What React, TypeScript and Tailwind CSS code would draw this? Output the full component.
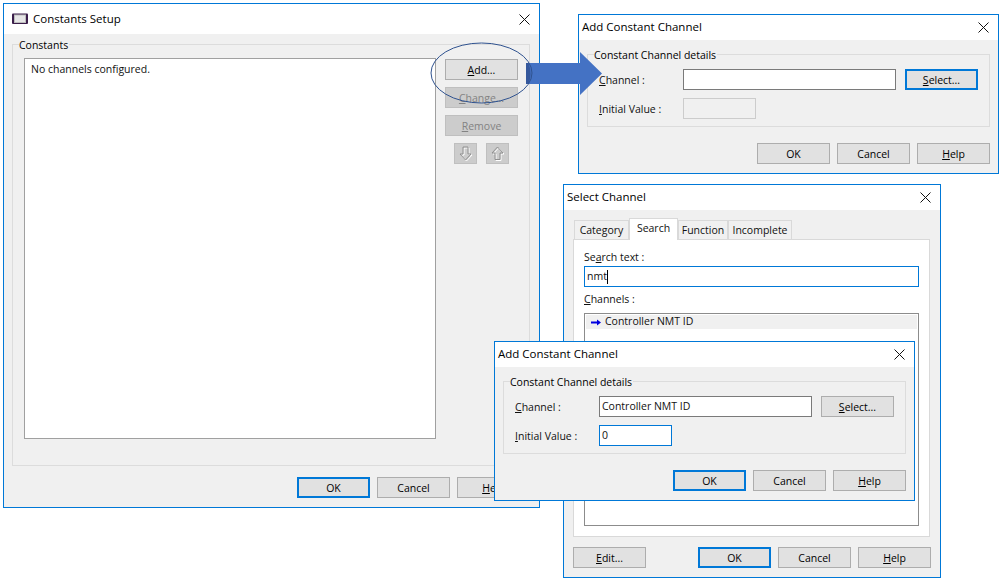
import type { ReactNode } from 'react';

function WinButton({ label, focused, disabled, className }: { label: ReactNode; focused?: boolean; disabled?: boolean; className?: string }) {
  let look = 'border border-[#adadad] bg-[#e1e1e1] text-black';
  if (focused) look = 'border-2 border-[#0078d7] bg-[#e1e1e1] text-black';
  if (disabled) look = 'border border-[#bfbfbf] bg-[#cccccc] text-[#838383]';
  return (
    <div className={`flex h-[21px] w-[73px] shrink-0 items-center justify-center ${look} ${className ?? ''}`}>
      <span className="pt-[2px]">{label}</span>
    </div>
  );
}

function TitleBar({ title, icon, tall }: { title: string; icon?: ReactNode; tall?: boolean }) {
  return (
    <div className={`flex shrink-0 items-center bg-white pl-[3px] pr-[9px] ${tall ? 'h-[30px]' : 'h-[25px]'}`}>
      {icon}
      <span className="flex-1 pb-[1px] text-[11.5px] text-black">{title}</span>
      <CloseIcon />
    </div>
  );
}

function CloseIcon() {
  return (
    <svg width="11" height="11" viewBox="0 0 11 11" className="shrink-0">
      <path d="M0.5 0.5 L10.5 10.5 M10.5 0.5 L0.5 10.5" stroke="#111" strokeWidth="1" fill="none" />
    </svg>
  );
}

function BookIcon() {
  return (
    <svg width="16" height="12" viewBox="0 0 16 12" className="mr-[5px] ml-[5px] shrink-0">
      <rect x="0" y="0.5" width="16" height="10.5" rx="1" fill="#3b1e4a" />
      <rect x="2" y="1.5" width="12" height="8.5" fill="#bdbdbd" />
      <rect x="3" y="2.5" width="10" height="6.5" fill="#e6e6e6" />
    </svg>
  );
}

function ArrowIcon({ up }: { up?: boolean }) {
  const d = up
    ? 'M6.5 1 L12 7 L9 7 L9 13.5 L4 13.5 L4 7 L1 7 Z'
    : 'M4 1 L9 1 L9 8 L12 8 L6.5 14 L1 8 L4 8 Z';
  return (
    <div className="flex h-[21px] w-[23px] items-center justify-center border border-[#bfbfbf] bg-[#cccccc]">
      <svg width="14" height="16" viewBox="0 0 14 16">
        <path d={d} transform="translate(1 1)" fill="none" stroke="#ffffff" strokeWidth="1" />
        <path d={d} fill="none" stroke="#909090" strokeWidth="1" />
      </svg>
    </div>
  );
}

function GroupBox({ label, className, children }: { label: string; className?: string; children: ReactNode }) {
  return (
    <div className={`relative border border-[#dcdcdc] ${className ?? ''}`}>
      <span className="absolute left-[6px] top-[-8px] bg-[#f0f0f0] pr-[1px] leading-[16px] text-black">{label}</span>
      {children}
    </div>
  );
}

function AddChannelDialog({ className, channel, value, selectFocused, valueEnabled, okFocused }: {
  className: string;
  channel?: string;
  value?: string;
  selectFocused?: boolean;
  valueEnabled?: boolean;
  okFocused?: boolean;
}) {
  return (
    <div className={`absolute flex flex-col border border-[#0078d7] bg-[#f0f0f0] ${className}`}>
      <TitleBar title="Add Constant Channel" />
      <div className="flex flex-1 flex-col px-[8px] pt-[14px]">
        <GroupBox label="Constant Channel details" className="h-[73px] px-[11px] pt-[14px]">
          <div className="flex items-center">
            <span className="w-[84px] shrink-0 pt-[2px]"><u>C</u>hannel :</span>
            <div className="flex h-[21px] w-[213px] shrink-0 items-center border border-[#7a7a7a] bg-white pl-[2px]">{channel}</div>
            <WinButton label={<><u>S</u>elect...</>} focused={selectFocused} className="ml-[9px]" />
          </div>
          <div className="mt-[8px] flex items-center">
            <span className="w-[84px] shrink-0 pt-[2px]"><u>I</u>nitial Value :</span>
            <div className={`flex h-[21px] w-[73px] items-center pl-[2px] ${valueEnabled ? 'border border-[#0078d7] bg-white' : 'border border-[#cccccc] bg-[#f0f0f0]'}`}>{value}</div>
          </div>
        </GroupBox>
        <div className="mt-[16px] flex justify-end gap-[7px]">
          <WinButton label="OK" focused={okFocused} />
          <WinButton label="Cancel" />
          <WinButton label={<><u>H</u>elp</>} />
        </div>
      </div>
    </div>
  );
}

function ConstantsSetup() {
  return (
    <div className="absolute left-[3px] top-[3px] flex h-[505px] w-[537px] flex-col border border-[#0078d7] bg-[#f0f0f0]">
      <TitleBar title="Constants Setup" icon={<BookIcon />} tall />
      <div className="flex flex-1 flex-col pl-[8px] pr-[9px] pt-[10px]">
        <GroupBox label="Constants" className="flex h-[422px] pl-[11px] pt-[13px]">
          <div className="h-[381px] w-[412px] border border-[#a0a0a0] bg-white px-[6px] pt-[3px]">No channels configured.</div>
          <div className="ml-[9px] flex w-[73px] flex-col gap-[7px] pt-[1px]">
            <WinButton label={<><u>A</u>dd...</>} />
            <WinButton label={<><u>C</u>hange...</>} disabled />
            <WinButton label={<><u>R</u>emove</>} disabled />
            <div className="flex justify-center gap-[9px]">
              <ArrowIcon />
              <ArrowIcon up />
            </div>
          </div>
        </GroupBox>
        <div className="mt-[11px] flex justify-end gap-[7px]">
          <WinButton label="OK" focused />
          <WinButton label="Cancel" />
          <WinButton label={<><u>H</u>elp</>} />
        </div>
      </div>
    </div>
  );
}

function SelectChannel() {
  const tabs = ['Category', 'Search', 'Function', 'Incomplete'];
  const widths = ['w-[55px]', 'w-[49px]', 'w-[50px]', 'w-[64px]'];
  return (
    <div className="absolute left-[563px] top-[184px] flex h-[394px] w-[378px] flex-col border border-[#0078d7] bg-[#f0f0f0]">
      <TitleBar title="Select Channel" />
      <div className="flex flex-1 flex-col px-[9px]">
        <div className="flex h-[29px] items-end pl-[1px]">
          {tabs.map((t, i) => (
            <div
              key={t}
              className={`flex items-center justify-center border border-b-0 border-[#d9d9d9] ${widths[i]} ${t === 'Search' ? 'relative z-10 mb-[-1px] h-[22px] bg-white pb-[2px]' : 'h-[19px] bg-[#f0f0f0] pt-[1px]'}`}
            >
              {t}
            </div>
          ))}
        </div>
        <div className="mr-[1px] flex h-[298px] flex-col border border-[#d9d9d9] bg-white px-[10px] pt-[9px]">
          <span className="leading-[16px]">Se<u>a</u>rch text :</span>
          <div className="mt-[1px] flex h-[21px] items-center border border-[#0078d7] pl-[2px]">nmt<span className="h-[14px] w-px bg-black" /></div>
          <span className="mt-[4px] leading-[16px]"><u>C</u>hannels :</span>
          <div className="mt-[6px] h-[213px] border border-[#8c8c8c] p-[1px]">
            <div className="flex h-[14px] items-center bg-[#f0f0f0] pl-[5px]">
              <svg width="10" height="7" viewBox="0 0 10 7" className="mr-[4px]">
                <path d="M0 2.5 H6 V0.5 L10 3.5 L6 6.5 V4.5 H0 Z" fill="#0000e0" />
              </svg>
              Controller NMT ID
            </div>
          </div>
        </div>
        <div className="mt-[10px] flex gap-[7px]">
          <WinButton label={<><u>E</u>dit...</>} className="mr-[45px]" />
          <WinButton label="OK" focused />
          <WinButton label="Cancel" />
          <WinButton label={<><u>H</u>elp</>} />
        </div>
      </div>
    </div>
  );
}

export default function App() {
  return (
    <div className="relative h-[582px] w-[1003px] overflow-hidden bg-white text-[10.5px] text-[#111] [font-family:'Open_Sans','Noto_Sans',sans-serif]">
      <ConstantsSetup />
      <AddChannelDialog className="left-[578px] top-[14px] h-[160px] w-[421px]" selectFocused />
      <SelectChannel />
      <AddChannelDialog className="left-[494px] top-[341px] h-[160px] w-[421px]" channel="Controller NMT ID" value="0" valueEnabled okFocused />
      <svg width="180" height="70" viewBox="0 0 180 70" className="absolute left-[428px] top-[38px]">
        <path d="M98 25 H152 V14 L174 35.5 L152 57 V46 H98 Z" fill="#4472c4" />
        <path d="M98 25 H100.5 Q104.5 35.5 100.5 46 H98 Z" fill="#35589c" />
        <ellipse cx="53.5" cy="35" rx="50.5" ry="30" fill="none" stroke="#2f528f" strokeWidth="1" />
      </svg>
    </div>
  );
}
